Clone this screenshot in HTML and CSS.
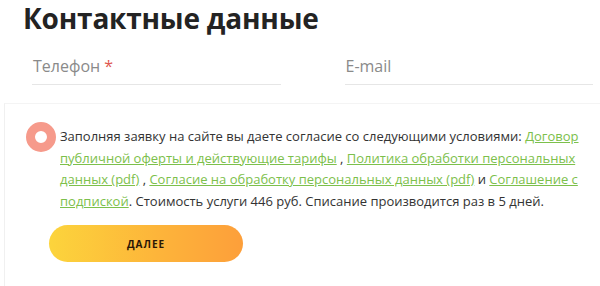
FILE: index.html
```
<!DOCTYPE html>
<html lang="ru">
<head>
    <meta charset="UTF-8">
    <meta name="viewport" content="width=device-width, initial-scale=1.0">
    <title>Контактные данные</title>
    <link rel="stylesheet" href="styles.css">
</head>
<body>
    <div class="form">
        <h1 class="title">Контактные данные</h1>
        <div class="fields">
            <div class="field">
                <span class="label">Телефон <span class="req">*</span></span>
            </div>
            <div class="field">
                <span class="label">E-mail</span>
            </div>
        </div>
        <div class="agree-box">
            <div class="agree">
                <span class="check"></span>
                <p class="agree-text">Заполняя заявку на сайте вы даете согласие со следующими условиями: <a href="#">Договор публичной оферты и действующие тарифы</a> , <a href="#">Политика обработки персональных данных (pdf)</a> , <a href="#">Согласие на обработку персональных данных (pdf)</a> и <a href="#">Соглашение с подпиской</a>. Стоимость услуги 446 руб. Списание производится раз в 5 дней.</p>
            </div>
            <button class="next">ДАЛЕЕ</button>
        </div>
    </div>
</body>
</html>
```

FILE: styles.css
```
body {
    margin: 0;
    padding: 0;
    background-color: #ffffff;
    font-family: "Open Sans", Arial, sans-serif;
    color: #333333;
}

.form {
    width: 600px;
    height: 286px;
    overflow: hidden;
}

.title {
    margin: 0;
    padding: 0 0 0 23px;
    font-size: 28px;
    line-height: 36px;
    font-weight: 700;
    color: #232323;
    letter-spacing: -0.2px;
}

.fields {
    display: flex;
    gap: 64px;
    padding: 12px 7px 0 32px;
}

.field {
    flex: 1;
    height: 36px;
    border-bottom: 1px solid #e6e6e6;
    display: flex;
    align-items: center;
}

.label {
    font-size: 16px;
    color: #8a8a8a;
    padding-left: 1px;
}

.req {
    color: #e0574f;
}

.agree-box {
    margin: 18px 0 0 4px;
    padding: 22px 0 0 21px;
    border-left: 1px solid #f0f0f0;
    border-top: 1px solid #f4f4f4;
    height: 200px;
}

.agree {
    display: flex;
    align-items: flex-start;
    gap: 4px;
}

.check {
    flex: none;
    width: 12px;
    height: 12px;
    margin-top: -4px;
    border: 9px solid #f69a8b;
    border-radius: 50%;
    background-color: #ffffff;
}

.agree-text {
    margin: 0;
    width: 520px;
    font-size: 13px;
    line-height: 21.5px;
    color: #333333;
}

.agree-text a {
    color: #7cc04b;
    text-decoration: underline;
}

.next {
    margin: 13px 0 0 23px;
    width: 194px;
    height: 37px;
    border: none;
    border-radius: 19px;
    background: linear-gradient(90deg, #fcd43c 0%, #fdb53a 55%, #fd9f3a 100%);
    font-family: "Open Sans", Arial, sans-serif;
    font-size: 10px;
    font-weight: 700;
    letter-spacing: 1px;
    color: #2a1606;
    cursor: pointer;
}
```
